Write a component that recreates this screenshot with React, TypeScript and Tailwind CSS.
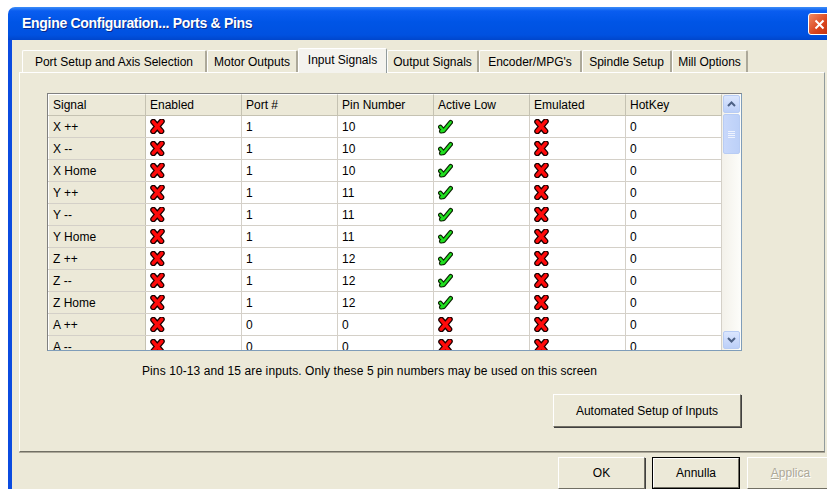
import React from "react";

type Row = {
  signal: string;
  port: string;
  pin: string;
  activeLow: boolean;
};

const rows: Row[] = [
  { signal: "X ++", port: "1", pin: "10", activeLow: true },
  { signal: "X --", port: "1", pin: "10", activeLow: true },
  { signal: "X Home", port: "1", pin: "10", activeLow: true },
  { signal: "Y ++", port: "1", pin: "11", activeLow: true },
  { signal: "Y --", port: "1", pin: "11", activeLow: true },
  { signal: "Y Home", port: "1", pin: "11", activeLow: true },
  { signal: "Z ++", port: "1", pin: "12", activeLow: true },
  { signal: "Z --", port: "1", pin: "12", activeLow: true },
  { signal: "Z Home", port: "1", pin: "12", activeLow: true },
  { signal: "A ++", port: "0", pin: "0", activeLow: false },
  { signal: "A --", port: "0", pin: "0", activeLow: false },
];

const tabs = [
  { label: "Port Setup and Axis Selection", w: "w-[185px]" },
  { label: "Motor Outputs", w: "w-[91px]" },
  { label: "Input Signals", w: "w-[89px]", active: true },
  { label: "Output Signals", w: "w-[92px]" },
  { label: "Encoder/MPG's", w: "w-[103px]" },
  { label: "Spindle Setup", w: "w-[90px]" },
  { label: "Mill Options", w: "w-[76px]" },
];

const headers = ["Enabled", "Port #", "Pin Number", "Active Low", "Emulated", "HotKey"];

// chunky red cross with dark outline
function RedX() {
  return (
    <svg width="15" height="15" viewBox="0 0 16 16">
      <path d="M3.5 3 L12 13 M12.5 2.5 L3.5 13" stroke="#1a0000" strokeWidth="6.5" strokeLinecap="round" fill="none" />
      <path d="M3.5 3 L12 13 M12.5 2.5 L3.5 13" stroke="#ff0a0a" strokeWidth="3.8" strokeLinecap="round" fill="none" />
    </svg>
  );
}

// green tick leaning to the right, dark outline
function GreenCheck() {
  return (
    <svg width="15" height="15" viewBox="0 0 16 16">
      <path d="M2.5 8.5 L6 12.5 L13.5 3.5 M6 12.5 L3.5 13" stroke="#0a2200" strokeWidth="5" strokeLinecap="round" strokeLinejoin="round" fill="none" />
      <path d="M2.5 8.5 L6 12.5 L13.5 3.5 M6 12.5 L3.5 13" stroke="#1fe01f" strokeWidth="2.6" strokeLinecap="round" strokeLinejoin="round" fill="none" />
    </svg>
  );
}

function Cell({ children }: { children: React.ReactNode }) {
  return (
    <div className="w-[96px] h-full flex items-center pl-[4px] border-r border-[#d4d0c8] bg-white overflow-hidden">
      {children}
    </div>
  );
}

function ScrollButton({ down }: { down?: boolean }) {
  return (
    <div className="h-[18px] mx-[1px] rounded-[2px] border border-[#b8ccf4] bg-[linear-gradient(to_bottom,#dbe6fe,#bccff8)] flex items-center justify-center">
      <svg width="9" height="6" viewBox="0 0 9 6">
        <path d={down ? "M1 1 L4.5 4.5 L8 1" : "M1 5 L4.5 1.5 L8 5"} stroke="#4d6185" strokeWidth="2" fill="none" />
      </svg>
    </div>
  );
}

function ClassicButton({ children, className = "" }: { children: React.ReactNode; className?: string }) {
  return (
    <div className={`flex items-center justify-center bg-[#ece9d8] border border-t-white border-l-white border-r-[#716f64] border-b-[#716f64] shadow-[1px_1px_0_#404040] ${className}`}>
      {children}
    </div>
  );
}

export default function App() {
  return (
    <div className="w-[827px] h-[489px] bg-white overflow-hidden pt-[7px] pl-[8px] font-['Liberation_Sans',Arial,sans-serif] text-[12px] text-black">
      <div className="w-[834px] h-[500px] flex flex-col">
        {/* title bar */}
        <div className="h-[33px] rounded-tl-[7px] flex items-center justify-between pl-[14px] pr-[12px] bg-[linear-gradient(to_bottom,#3c8df8_0%,#0a5df0_12%,#0055e6_45%,#0051e0_85%,#0046cc_100%)]">
          <span className="text-white font-bold text-[14px] tracking-[-0.3px] [text-shadow:1px_1px_0_#0a2a8a]">
            Engine Configuration... Ports &amp; Pins
          </span>
          <div className="w-[22px] h-[22px] mt-[1px] rounded-[3px] border border-white bg-[linear-gradient(135deg,#f08a62,#d9431c_60%,#c2340f)] flex items-center justify-center">
            <svg width="11" height="11" viewBox="0 0 11 11">
              <path d="M1.5 1.5 L9.5 9.5 M9.5 1.5 L1.5 9.5" stroke="white" strokeWidth="2" />
            </svg>
          </div>
        </div>

        {/* window body */}
        <div className="flex-1 bg-[#ece9d8] border-l-4 border-[#0b4be0] pl-[7px] pt-[8px]">
          {/* tab strip */}
          <div className="flex items-end h-[24px] pl-[3px]">
            {tabs.map((t) =>
              t.active ? (
                <div
                  key={t.label}
                  className={`${t.w} h-[25px] -mb-[1px] relative z-10 bg-[#f4f3ee] border-t border-l border-white border-r border-r-[#919b9c] rounded-t-[2px] flex items-center justify-center pb-[3px]`}
                >
                  {t.label}
                </div>
              ) : (
                <div
                  key={t.label}
                  className={`${t.w} h-[22px] bg-[#ece9d8] border-t border-l border-white border-r-2 border-r-[#aca899] rounded-t-[2px] flex items-center justify-center`}
                >
                  {t.label}
                </div>
              )
            )}
          </div>

          {/* tab panel */}
          <div className="w-[806px] h-[380px] border border-t-white border-l-white border-r-[#919b9c] border-b-[#716f64] shadow-[0_1px_0_#aca899] flex flex-col">
            {/* signal grid */}
            <div className="ml-[27px] mt-[20px] w-[695px] h-[258px] border border-[#7f9db9] border-t-[#808080] border-l-[#808080] flex bg-white overflow-hidden">
              <div className="w-[674px] flex flex-col">
                <div className="h-[22px] shrink-0 flex bg-[#ece9d8] border-b border-[#c5c2b2]">
                  <div className="w-[98px] h-full flex items-center pl-[4px] border-r border-[#c5c2b2] border-l border-l-white border-t border-t-white">
                    Signal
                  </div>
                  {headers.map((h) => (
                    <div key={h} className="w-[96px] h-full flex items-center pl-[4px] border-r border-[#c5c2b2] border-t border-t-white">
                      {h}
                    </div>
                  ))}
                </div>
                {rows.map((r) => (
                  <div key={r.signal} className="h-[22px] shrink-0 flex border-b border-[#d4d0c8]">
                    <div className="w-[98px] h-full flex items-center pl-[4px] bg-[#ece9d8] border-r border-[#c5c2b2] border-l border-l-white">
                      {r.signal}
                    </div>
                    <Cell>
                      <RedX />
                    </Cell>
                    <Cell>{r.port}</Cell>
                    <Cell>{r.pin}</Cell>
                    <Cell>{r.activeLow ? <GreenCheck /> : <RedX />}</Cell>
                    <Cell>
                      <RedX />
                    </Cell>
                    <Cell>0</Cell>
                  </div>
                ))}
              </div>
              {/* vertical scrollbar */}
              <div className="w-[19px] ml-auto flex flex-col bg-[linear-gradient(to_right,#f3f1ea,#fdfdfa)] py-[1px]">
                <ScrollButton />
                <div className="h-[40px] mx-[1px] mt-[1px] rounded-[2px] border border-[#b8ccf4] bg-[linear-gradient(to_right,#c8d8fb,#bcd0f8)] flex items-center justify-center">
                  <div className="flex flex-col gap-[1px]">
                    <div className="w-[7px] h-[1px] bg-[#eef3fe]" />
                    <div className="w-[7px] h-[1px] bg-[#eef3fe]" />
                    <div className="w-[7px] h-[1px] bg-[#eef3fe]" />
                    <div className="w-[7px] h-[1px] bg-[#eef3fe]" />
                  </div>
                </div>
                <div className="flex-1" />
                <ScrollButton down />
              </div>
            </div>

            <div className="pl-[122px] mt-[13px] leading-[14px] tracking-[0.1px]">
              Pins 10-13 and 15 are inputs. Only these 5 pin numbers may be used on this screen
            </div>

            <div className="flex justify-end pr-[83px] mt-[16px]">
              <ClassicButton className="w-[188px] h-[33px]">Automated Setup of Inputs</ClassicButton>
            </div>
          </div>

          {/* dialog buttons */}
          <div className="flex gap-[7px] pl-[539px] mt-[5px]">
            <ClassicButton className="w-[87px] h-[32px]">OK</ClassicButton>
            <div className="w-[88px] h-[32px] border border-black">
              <ClassicButton className="w-full h-full shadow-none">Annulla</ClassicButton>
            </div>
            <ClassicButton className="w-[87px] h-[32px] text-[#aca899] [text-shadow:1px_1px_0_white]">
              <span>
                <span className="underline">A</span>pplica
              </span>
            </ClassicButton>
          </div>
        </div>
      </div>
    </div>
  );
}
